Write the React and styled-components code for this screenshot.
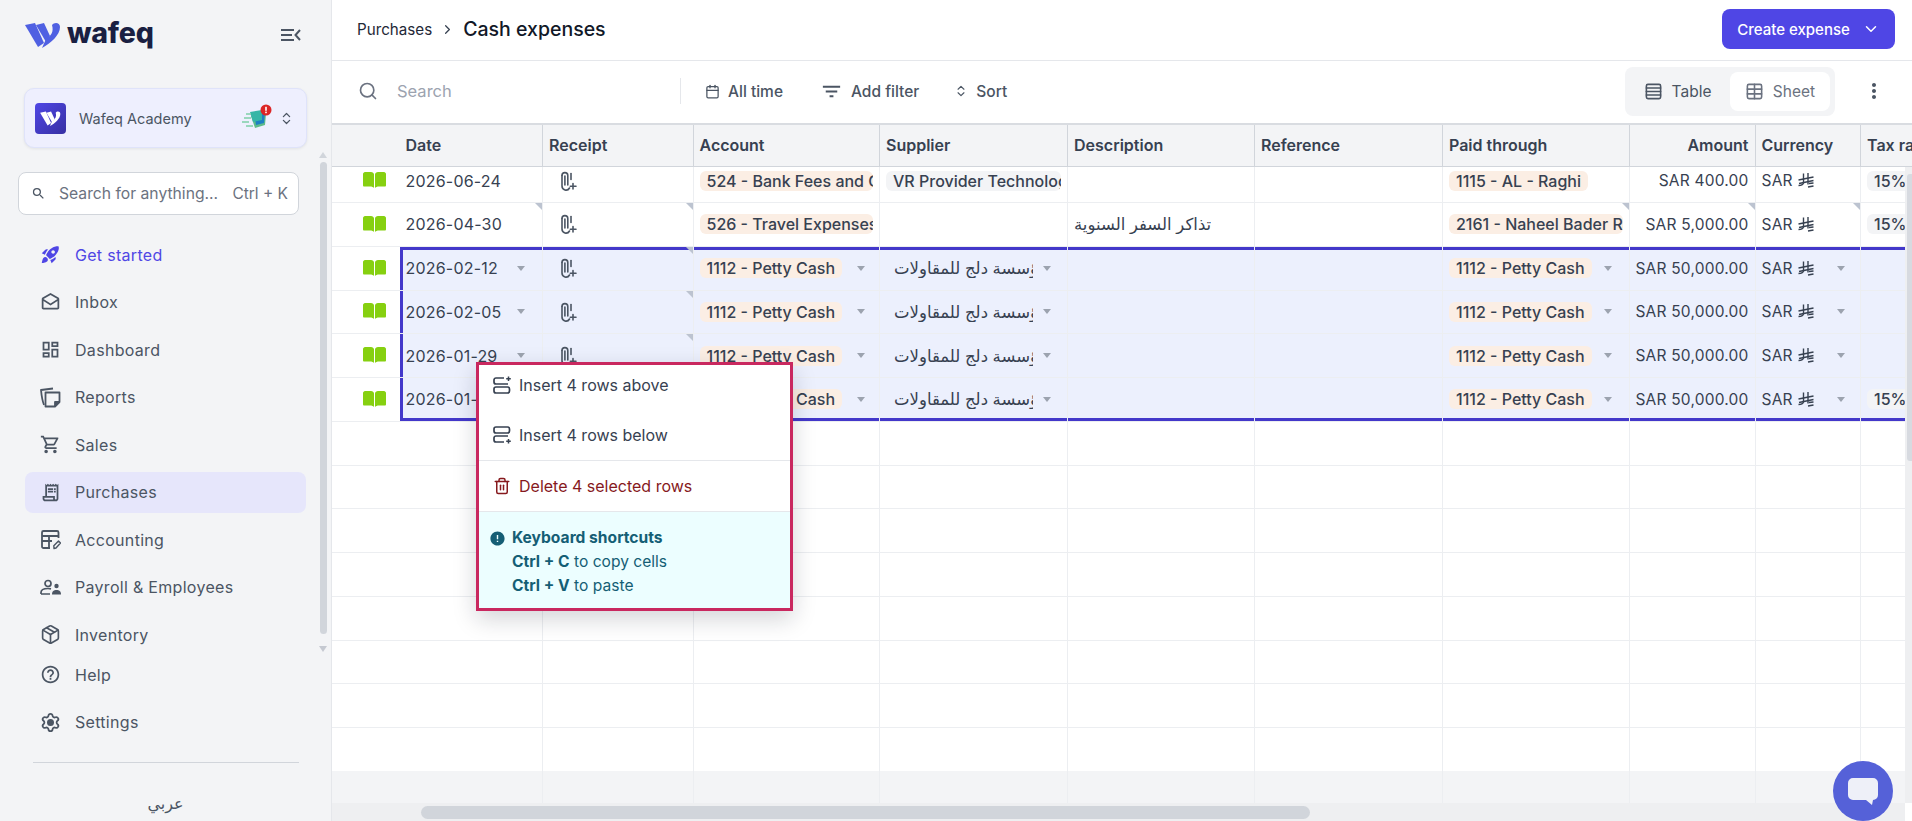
import React from "react";
import styled, { createGlobalStyle, css } from "styled-components";
import { Calendar, ChevronDown, ChevronRight, ChevronsUpDown, Package, Rows4, Search as SearchIcon, Settings, Table as TableIcon, Trash2 } from "lucide-react";
import { MdError, MdFilterList, MdMoreVert, MdOutlineDashboard, MdOutlineDrafts, MdOutlineHelpOutline, MdOutlineReceiptLong, MdOutlineShoppingCart, MdRocketLaunch, MdSearch } from "react-icons/md";

const COLS = "67.5px 143.5px 150.5px 186.5px 188px 187px 188px 187px 125.5px 105.5px 200px";
const FONT = `Inter, "Noto Sans", "DejaVu Sans", sans-serif`;

const GlobalStyle = createGlobalStyle`
  html, body { margin: 0; padding: 0; height: 100%; overflow: hidden; background: #fff; }
  body { font-family: ${FONT}; color: #374151; }
  * { box-sizing: border-box; }
`;

const Page = styled.div`
  position: relative;
  display: flex;
  width: 1912px;
  height: 821px;
  overflow: hidden;
`;

/* sidebar */
const Sidebar = styled.aside`
  position: relative;
  flex: 0 0 330px;
  display: flex;
  flex-direction: column;
  background: #f3f4f6;
  border-right: 1px solid #e5e7eb;
`;

const LogoRow = styled.div`
  height: 70px;
  display: flex;
  align-items: center;
  justify-content: space-between;
  padding: 0 30px 0 25px;
`;

const Brand = styled.div`
  display: flex;
  align-items: center;
  gap: 6px;
`;

const BrandName = styled.span`
  margin-top: -4px;
  font-size: 28.5px;
  line-height: 30px;
  font-weight: 800;
  color: #1a1f42;
  letter-spacing: -0.2px;
`;

const Workspace = styled.div`
  margin: 18px 24px 0;
  height: 60px;
  display: flex;
  align-items: center;
  padding: 0 10px;
  background: #eeeffe;
  border: 1px solid #dfe3fa;
  border-radius: 10px;
  box-shadow: 0 1px 3px rgba(17, 24, 39, 0.08);
  font-size: 14.5px;
  color: #4b5563;
`;

const WorkspaceLogo = styled.div`
  width: 31px;
  height: 31px;
  margin-right: 13px;
  border-radius: 4px;
  background: linear-gradient(135deg, #4f46e5, #3730a3);
  display: flex;
  align-items: center;
  justify-content: center;
`;

const WorkspaceName = styled.span`
  flex: 1;
`;

const SideSearch = styled.div`
  margin: 24px 0 0 18px;
  width: 281px;
  height: 43px;
  display: flex;
  align-items: center;
  padding: 0 10px 0 12px;
  background: #fff;
  border: 1px solid #d1d5db;
  border-radius: 8px;
  font-size: 15.7px;
  color: #6b7280;
  svg { margin-right: 13px; color: #4b5563; }
  span:last-child { margin-left: auto; font-size: 15.5px; }
`;

const Nav = styled.nav`
  margin: 19px 25px 0;
  width: 281px;
  display: flex;
  flex-direction: column;
  gap: 6.5px;
`;

const NavItem = styled.div`
  height: 41px;
  display: flex;
  align-items: center;
  gap: 14px;
  padding-left: 15px;
  border-radius: 8px;
  font-size: 16px;
  letter-spacing: 0.3px;
  color: ${(p) => (p.$accent ? "#4f46e5" : "#4b5563")};
  background: ${(p) => (p.$active ? "#e6e6fb" : "transparent")};
  svg { flex: 0 0 21px; width: 21px; height: 21px; }
`;

const BottomNav = styled(Nav)`
  margin-top: -1px;
`;

const GearIcon = styled(Settings)`
  circle { fill: currentColor; }
`;

const SideRule = styled.hr`
  margin: 19px 32px 0 33px;
  border: 0;
  border-top: 1px solid #d1d5db;
`;

const Lang = styled.div`
  margin-top: 30px;
  text-align: center;
  font-size: 16px;
  color: #4b5563;
`;

const SideThumb = styled.div`
  position: absolute;
  left: 320px;
  top: 162px;
  width: 7px;
  height: 472px;
  border-radius: 4px;
  background: #d1d5db;
`;

const SideArrow = styled.div`
  position: absolute;
  left: 319px;
  top: ${(p) => p.$top}px;
  width: 0;
  height: 0;
  border-left: 4.5px solid transparent;
  border-right: 4.5px solid transparent;
  ${(p) => (p.$down ? "border-top: 6px solid #c5c9d1;" : "border-bottom: 6px solid #d1d5db;")}
`;

/* main */
const Main = styled.main`
  flex: 1;
  min-width: 0;
  display: flex;
  flex-direction: column;
`;

const TopBar = styled.header`
  height: 61px;
  flex: none;
  display: flex;
  align-items: center;
  padding: 0 17px 2px 25px;
  border-bottom: 1px solid #e5e7eb;
`;

const Crumb = styled.span`
  font-size: 15.2px;
  color: #1f2937;
`;

const CrumbSep = styled.span`
  display: flex;
  margin: 0 8px;
  color: #374151;
`;

const Title = styled.h1`
  margin: 0;
  font-size: 19.5px;
  font-weight: 500;
  color: #111827;
`;

const CreateButton = styled.button`
  margin-left: auto;
  width: 173px;
  height: 40px;
  display: flex;
  align-items: center;
  justify-content: center;
  gap: 12px;
  border: 0;
  border-radius: 8px;
  background: #4f46e5;
  color: #fff;
  font: 500 15px ${FONT};
`;

const Toolbar = styled.div`
  height: 62px;
  flex: none;
  display: flex;
  align-items: center;
  padding: 0 0 2px 26px;
`;

const SearchBox = styled.div`
  width: 323px;
  height: 26px;
  display: flex;
  align-items: center;
  gap: 19px;
  border-right: 1px solid #e5e7eb;
  color: #6b7280;
  font-size: 16.5px;
  span { color: #9ca3af; }
`;

const ToolButton = styled.div`
  display: flex;
  align-items: center;
  gap: ${(p) => p.$gap || 8}px;
  margin-left: ${(p) => p.$ml}px;
  font-size: 15.5px;
  font-weight: 500;
  color: #4b5563;
`;

const Segment = styled.div`
  margin-left: auto;
  width: 210px;
  height: 49px;
  display: flex;
  align-items: center;
  padding: 5px 5px 5px 0;
  border-radius: 8px;
  background: #f3f4f6;
`;

const SegmentItem = styled.div`
  flex: ${(p) => (p.$active ? "0 0 100px" : "1")};
  height: 39px;
  display: flex;
  align-items: center;
  justify-content: center;
  gap: 9px;
  border-radius: 8px;
  background: ${(p) => (p.$active ? "#fff" : "transparent")};
  font-size: 15.5px;
  color: ${(p) => (p.$active ? "#6b7280" : "#4b5563")};
`;

const MoreButton = styled.div`
  width: 77px;
  display: flex;
  justify-content: center;
  color: #4b5563;
`;

/* table */
const TableArea = styled.section`
  flex: 1;
  min-height: 0;
  display: flex;
  flex-direction: column;
`;

const HeadRow = styled.div`
  flex: none;
  display: grid;
  grid-template-columns: ${COLS};
  height: 44px;
  overflow: hidden;
  background: #f3f4f6;
  border-top: 2px solid #d9dce1;
  border-bottom: 1px solid #d1d5db;
`;

const HeadCell = styled.div`
  display: flex;
  align-items: center;
  justify-content: ${(p) => (p.$right ? "flex-end" : "flex-start")};
  padding: 0 6px 2px;
  border-right: ${(p) => (p.$plain ? "0" : "1px solid #d1d5db")};
  font-size: 16px;
  font-weight: 600;
  color: #374151;
  white-space: nowrap;
`;

const BodyWrap = styled.div`
  flex: 1;
  min-height: 0;
  display: flex;
`;

const BodyColumn = styled.div`
  flex: 1;
  min-width: 0;
  display: flex;
  flex-direction: column;
`;

const Rows = styled.div`
  flex: 1;
  min-height: 0;
  overflow: hidden;
`;

const RowsInner = styled.div`
  margin-top: -7.75px;
`;

const Row = styled.div`
  display: grid;
  grid-template-columns: ${COLS};
  height: 43.75px;
`;

const selection = (p) => {
  const shadows = [];
  if (p.$selTop) shadows.push("inset 0 3px 0 #4338ca");
  if (p.$selBottom) shadows.push("inset 0 -3px 0 #4338ca");
  if (p.$selLeft) shadows.push("inset 3px 0 0 #4338ca");
  return shadows.length ? `box-shadow: ${shadows.join(", ")};` : "";
};

const Cell = styled.div`
  position: relative;
  min-width: 0;
  display: flex;
  align-items: center;
  justify-content: ${(p) => (p.$right ? "flex-end" : "flex-start")};
  padding: 0 6px;
  overflow: hidden;
  border-right: ${(p) => (p.$plain ? "0" : "1px solid #eceef1")};
  border-bottom: 1px solid #eceef1;
  background: ${(p) => (p.$selected ? "#ecf0fd" : "#fff")};
  font-size: 15.5px;
  letter-spacing: 0.2px;
  color: #374151;
  white-space: nowrap;
  ${selection}
  ${(p) =>
    p.$mark &&
    css`
      &::after {
        content: "";
        position: absolute;
        top: 0;
        right: 0;
        border-top: 7px solid #bcc3d0;
        border-left: 7px solid transparent;
      }
    `}
`;

const DateText = styled.span`
  font-size: 16px;
  letter-spacing: 0.2px;
`;

const Tag = styled.span`
  display: inline-block;
  max-width: 100%;
  height: 20px;
  line-height: 20px;
  padding: 0 7px;
  overflow: hidden;
  border-radius: 6px;
  background: ${(p) => (p.$gray ? "#f3f4f6" : "#fbeee4")};
  font-size: 16px;
  letter-spacing: 0;
  font-weight: 500;
  color: #374151;
`;

const ArabicText = styled.span`
  display: block;
  overflow: hidden;
  min-width: 0;
  flex: ${(p) => (p.$fill ? "1" : "none")};
  margin: ${(p) => (p.$fill ? "0 10px 0 8px" : "0")};
  font-size: 16.5px;
  letter-spacing: 0;
  color: #374151;
`;

const Caret = styled.i`
  flex: none;
  margin-left: auto;
  margin-right: ${(p) => p.$mr || 11}px;
  width: 0;
  height: 0;
  border-left: 4.5px solid transparent;
  border-right: 4.5px solid transparent;
  border-top: 5px solid #9ca3af;
`;

const BookCell = styled.div`
  display: flex;
  align-items: center;
  padding-left: 31px;
  background: #fff;
  border-bottom: 1px solid #eceef1;
`;

const ClipWrap = styled.span`
  display: flex;
  margin-left: 12px;
  color: #4b5563;
`;

const FootRow = styled.div`
  flex: none;
  display: grid;
  grid-template-columns: ${COLS};
  height: 32px;
  background: #f3f4f6;
`;

const FootCell = styled.div`
  border-right: ${(p) => (p.$plain ? "0" : "1px solid #eceef1")};
`;

const HScroll = styled.div`
  flex: none;
  height: 18px;
  padding: 3px 0 0 89px;
  background: #eeeff1;
`;

const HThumb = styled.div`
  width: 889px;
  height: 13px;
  border-radius: 7px;
  background: #d1d5db;
`;

const VScroll = styled.div`
  flex: 0 0 7px;
  margin-bottom: 18px;
  padding: 7px 0 0 2px;
  background: #eeeff1;
`;

const VThumb = styled.div`
  height: 287px;
  border-radius: 3px 0 0 3px;
  background: #d7dae0;
`;

/* context menu */
const Menu = styled.div`
  position: absolute;
  left: 476px;
  top: 362px;
  width: 317px;
  height: 249px;
  display: flex;
  flex-direction: column;
  background: #fff;
  border: 3px solid #c9285f;
  box-shadow: 0 8px 22px rgba(17, 24, 39, 0.18);
`;

const MenuItem = styled.div`
  height: ${(p) => (p.$first ? 45 : 50)}px;
  flex: none;
  display: flex;
  align-items: center;
  gap: 8px;
  padding: ${(p) => (p.$first ? "0 0 5px 14px" : "0 0 0 14px")};
  font-size: 16px;
  color: ${(p) => (p.$danger ? "#86191d" : "#374151")};
  svg { flex: none; }
`;

const MenuRule = styled.div`
  height: 1px;
  flex: none;
  background: #e5e7eb;
`;

const Shortcuts = styled.div`
  flex: 1;
  display: flex;
  gap: 6px;
  padding: 14px 0 0 10px;
  background: #ecfeff;
  color: #155e75;
  font-size: 15.6px;
  line-height: 24px;
  b { font-weight: 700; }
  svg { flex: none; margin-top: 4px; }
`;

const ChatBubble = styled.div`
  position: absolute;
  left: 1833px;
  top: 761px;
  width: 60px;
  height: 60px;
  display: flex;
  align-items: center;
  justify-content: center;
  border-radius: 50%;
  background: #5561d8;
`;

/* drawn icons */
const LogoMark = () => (
  <svg width="36" height="26" viewBox="0 0 36 26" fill="#4f60e2">
    <path d="M0 3 L10 1 L19 21 L13 25 Z" />
    <path d="M11 3 L19 1 L25 14 L21 20 Z" />
    <path d="M27 3 C29 0 35 0 35 5 C35 13 26 21 17 26 L21 17 C26 14 29 10 27 3 Z" />
  </svg>
);

const SmallMark = () => (
  <svg width="21" height="15" viewBox="0 0 36 26" fill="#fff">
    <path d="M0 3 L10 1 L19 21 L13 25 Z" />
    <path d="M11 3 L19 1 L25 14 L21 20 Z" />
    <path d="M27 3 C29 0 35 0 35 5 C35 13 26 21 17 26 L21 17 C26 14 29 10 27 3 Z" />
  </svg>
);

const CollapseIcon = () => (
  <svg width="20" height="14" viewBox="0 0 20 14" fill="none" stroke="#4b5563" strokeWidth="2">
    <path d="M0 2 H13 M0 7 H11 M0 12 H13 M19 2 L14.5 7 L19 12" />
  </svg>
);

const SpeedIcon = () => (
  <svg width="30" height="28" viewBox="0 0 30 28">
    <path d="M9 12 L24 10 L23 21 L13 24 Z" fill="#5dbb8a" />
    <path d="M12 9 L23 8 L22 19 L14 21 Z" fill="#1d7fc4" />
    <path d="M8 8 L20 6 L20 16 L11 18 Z" fill="#35b6a6" />
    <path d="M4 10 H9 M2 14 H9 M0 18 H7 M4 22 H11" stroke="#7fd0a8" strokeWidth="1.6" />
    <circle cx="24" cy="6" r="5.5" fill="#dc2626" />
    <rect x="23.2" y="2.8" width="1.6" height="4" fill="#fff" />
    <rect x="23.2" y="7.6" width="1.6" height="1.6" fill="#fff" />
  </svg>
);

const ReportsIcon = () => (
  <svg viewBox="0 0 21 21" fill="none" stroke="currentColor" strokeWidth="1.8" strokeLinejoin="round">
    <path d="M4 18 C2 13 1.5 8 1 3 L13 1.5" />
    <path d="M5.5 5.5 H19.5 V15 L15 19.5 H5.5 Z" />
    <path d="M19.5 15 H15 V19.5" fill="currentColor" />
  </svg>
);

const AccountingIcon = () => (
  <svg viewBox="0 0 21 21" fill="none" stroke="currentColor" strokeWidth="1.8" strokeLinejoin="round">
    <path d="M10 19 H3.5 A1.5 1.5 0 0 1 2 17.5 V3.5 A1.5 1.5 0 0 1 3.5 2 H17 A1.5 1.5 0 0 1 18.5 3.5 V9" />
    <path d="M2 7 H18.5 M2 12 H12 M9 7 V19" />
    <path d="M14 19.5 L13.8 16.8 L18.5 12 L20.5 14 L16 19 Z" strokeWidth="1.4" />
  </svg>
);

const PeopleIcon = () => (
  <svg viewBox="0 0 21 21" fill="none" stroke="currentColor" strokeWidth="1.7">
    <circle cx="8" cy="6.5" r="3" />
    <path d="M1 17 V15.5 C1 12.5 5 11.5 8 11.5 C9 11.5 10 11.6 11 11.9 M1 17 H10" />
    <circle cx="16.5" cy="9" r="2.2" fill="currentColor" stroke="none" />
    <path d="M12 17.5 C12 14 14 13 16.5 13 C19 13 21 14 21 17.5 Z" fill="currentColor" stroke="none" />
  </svg>
);

const ClipIcon = () => (
  <svg width="16" height="20" viewBox="0 0 16 20" fill="none" stroke="currentColor" strokeWidth="1.6" strokeLinecap="round">
    <path d="M1 4.5 A2.9 2.9 0 0 1 6.8 4.5 V14" />
    <path d="M1 4.5 V15 A4 4 0 0 0 8.5 17" />
    <path d="M3.9 5 V14" />
    <path d="M10 2.5 V8.5" />
    <path d="M12 12.5 V18 M9.3 15.3 H15" />
  </svg>
);

const BookIcon = () => (
  <svg width="23" height="17" viewBox="0 0 23 17" fill="#86d010">
    <path d="M0 2 C0 1 1 0 2 0 H8 C9.5 0 11 1 11 2.5 V16 C10 15 9 14.5 7 14.5 H1 C0.5 14.5 0 14 0 13.5 Z" />
    <path d="M23 2 C23 1 22 0 21 0 H15 C13.5 0 12 1 12 2.5 V16 C13 15 14 14.5 16 14.5 H22 C22.5 14.5 23 14 23 13.5 Z" />
  </svg>
);

const RiyalIcon = () => (
  <svg width="16" height="15" viewBox="0 0 16 15" fill="none" stroke="#374151" strokeWidth="1.4" style={{ marginLeft: 5, flex: "none" }}>
    <path d="M5.5 0.5 V10 C5 11.5 3 12.5 0.5 12.5" />
    <path d="M10 0 V11.5" />
    <path d="M0.5 7 L15.5 4 M1 10.5 L15.5 7.5 M10 14 L15.5 13 M11 10.5 L15.5 10" />
  </svg>
);

const RowsAboveIcon = () => (
  <svg width="18" height="18" viewBox="0 0 18 18" fill="none" stroke="#374151" strokeWidth="1.7">
    <path d="M11 2 H3 A2 2 0 0 0 1 4 V6 A2 2 0 0 0 3 8 H15" />
    <rect x="1" y="11" width="15.5" height="6" rx="2" />
    <path d="M15.5 0.5 V5 M13.2 2.7 H17.8" strokeWidth="1.5" />
  </svg>
);

const RowsBelowIcon = () => (
  <svg width="18" height="18" viewBox="0 0 18 18" fill="none" stroke="#374151" strokeWidth="1.7">
    <rect x="1" y="1" width="15.5" height="6" rx="2" />
    <path d="M15 10 H3 A2 2 0 0 0 1 12 V14 A2 2 0 0 0 3 16 H11" />
    <path d="M15.5 13 V17.5 M13.2 15.2 H17.8" strokeWidth="1.5" />
  </svg>
);

const ChatIcon = () => (
  <svg width="30" height="27" viewBox="0 0 30 27">
    <path d="M5 0 H25 A5 5 0 0 1 30 5 V17 A5 5 0 0 1 25 22 L24 27 L18 22 H5 A5 5 0 0 1 0 17 V5 A5 5 0 0 1 5 0 Z" fill="#eef0f8" />
  </svg>
);

const navMain = [
  { label: "Get started", icon: <MdRocketLaunch />, accent: true },
  { label: "Inbox", icon: <MdOutlineDrafts /> },
  { label: "Dashboard", icon: <MdOutlineDashboard /> },
  { label: "Reports", icon: <ReportsIcon /> },
  { label: "Sales", icon: <MdOutlineShoppingCart /> },
  { label: "Purchases", icon: <MdOutlineReceiptLong />, active: true },
  { label: "Accounting", icon: <AccountingIcon /> },
  { label: "Payroll & Employees", icon: <PeopleIcon /> },
  { label: "Inventory", icon: <Package strokeWidth={1.9} /> },
];

const headers = ["Date", "Receipt", "Account", "Supplier", "Description", "Reference", "Paid through", "Amount", "Currency", "Tax rate"];

const SUPPLIER = "مؤسسة دلج للمقاولات";
const petty = "1112 - Petty Cash";

const rows = [
  { date: "2026-06-24", account: "524 - Bank Fees and Charges", supplier: "VR Provider Technologies", paid: "1115 - AL - Raghi", amount: "SAR 400.00", tax: "15%" },
  { date: "2026-04-30", account: "526 - Travel Expenses", desc: "تذاكر السفر السنوية", paid: "2161 - Naheel Bader Rashid", amount: "SAR 5,000.00", tax: "15%", marks: ["date", "receipt", "paid", "amount", "currency"] },
  { date: "2026-02-12", account: petty, arabicSupplier: SUPPLIER, paid: petty, amount: "SAR 50,000.00", selected: true, first: true, marks: ["receipt"] },
  { date: "2026-02-05", account: petty, arabicSupplier: SUPPLIER, paid: petty, amount: "SAR 50,000.00", selected: true, marks: ["receipt"] },
  { date: "2026-01-29", account: petty, arabicSupplier: SUPPLIER, paid: petty, amount: "SAR 50,000.00", selected: true, marks: ["receipt"] },
  { date: "2026-01-22", account: petty, arabicSupplier: SUPPLIER, paid: petty, amount: "SAR 50,000.00", tax: "15%", selected: true, last: true },
];

const emptyRows = Array.from({ length: 8 }, (_, i) => i);

function DataRow({ row }) {
  const sel = { $selected: row.selected, $selTop: row.first, $selBottom: row.last };
  const mark = (name) => (row.marks || []).includes(name);
  return (
    <Row>
      <BookCell>
        <BookIcon />
      </BookCell>
      <Cell {...sel} $selLeft={row.selected} $mark={mark("date")}>
        <DateText>{row.date}</DateText>
        {row.selected && <Caret />}
      </Cell>
      <Cell {...sel} $mark={mark("receipt")}>
        <ClipWrap>
          <ClipIcon />
        </ClipWrap>
      </Cell>
      <Cell {...sel}>
        <Tag>{row.account}</Tag>
        {row.selected && <Caret $mr={8} />}
      </Cell>
      <Cell {...sel}>
        {row.supplier && <Tag $gray>{row.supplier}</Tag>}
        {row.arabicSupplier && <ArabicText $fill>{row.arabicSupplier}</ArabicText>}
        {row.selected && <Caret $mr={10} />}
      </Cell>
      <Cell {...sel}>{row.desc && <ArabicText>{row.desc}</ArabicText>}</Cell>
      <Cell {...sel} />
      <Cell {...sel} $mark={mark("paid")}>
        <Tag>{row.paid}</Tag>
        {row.selected && <Caret />}
      </Cell>
      <Cell {...sel} $right $mark={mark("amount")}>
        {row.amount}
      </Cell>
      <Cell {...sel} $mark={mark("currency")}>
        SAR
        <RiyalIcon />
        {row.selected && <Caret $mr={9} />}
      </Cell>
      <Cell {...sel}>{row.tax && <Tag $gray>{row.tax}</Tag>}</Cell>
    </Row>
  );
}

function EmptyRow() {
  return (
    <Row>
      <BookCell />
      {headers.map((h) => (
        <Cell key={h} />
      ))}
    </Row>
  );
}

export default function App() {
  return (
    <Page>
      <GlobalStyle />
      <Sidebar>
        <LogoRow>
          <Brand>
            <LogoMark />
            <BrandName>wafeq</BrandName>
          </Brand>
          <CollapseIcon />
        </LogoRow>
        <Workspace>
          <WorkspaceLogo>
            <SmallMark />
          </WorkspaceLogo>
          <WorkspaceName>Wafeq Academy</WorkspaceName>
          <SpeedIcon />
          <ChevronsUpDown size={15} color="#4b5563" style={{ marginLeft: 7, marginRight: 2 }} />
        </Workspace>
        <SideSearch>
          <MdSearch size={15} />
          <span>Search for anything...</span>
          <span>Ctrl + K</span>
        </SideSearch>
        <Nav>
          {navMain.map((item) => (
            <NavItem key={item.label} $accent={item.accent} $active={item.active}>
              {item.icon}
              {item.label}
            </NavItem>
          ))}
        </Nav>
        <BottomNav>
          <NavItem>
            <MdOutlineHelpOutline />
            Help
          </NavItem>
          <NavItem>
            <GearIcon strokeWidth={2} />
            Settings
          </NavItem>
        </BottomNav>
        <SideRule />
        <Lang>عربي</Lang>
        <SideArrow $top={152} />
        <SideThumb />
        <SideArrow $top={646} $down />
      </Sidebar>

      <Main>
        <TopBar>
          <Crumb>Purchases</Crumb>
          <CrumbSep>
            <ChevronRight size={15} />
          </CrumbSep>
          <Title>Cash expenses</Title>
          <CreateButton>
            Create expense
            <ChevronDown size={18} />
          </CreateButton>
        </TopBar>

        <Toolbar>
          <SearchBox>
            <SearchIcon size={20} />
            <span>Search</span>
          </SearchBox>
          <ToolButton $ml={24}>
            <Calendar size={15} />
            All time
          </ToolButton>
          <ToolButton $ml={37}>
            <MdFilterList size={23} />
            Add filter
          </ToolButton>
          <ToolButton $ml={35} $gap={8}>
            <ChevronsUpDown size={14} />
            Sort
          </ToolButton>
          <Segment>
            <SegmentItem>
              <Rows4 size={19} />
              Table
            </SegmentItem>
            <SegmentItem $active>
              <TableIcon size={19} />
              Sheet
            </SegmentItem>
          </Segment>
          <MoreButton>
            <MdMoreVert size={24} />
          </MoreButton>
        </Toolbar>

        <TableArea>
          <HeadRow>
            <HeadCell $plain />
            {headers.map((h) => (
              <HeadCell key={h} $right={h === "Amount"}>
                {h}
              </HeadCell>
            ))}
          </HeadRow>
          <BodyWrap>
            <BodyColumn>
              <Rows>
                <RowsInner>
                  {rows.map((row) => (
                    <DataRow key={row.date} row={row} />
                  ))}
                  {emptyRows.map((i) => (
                    <EmptyRow key={i} />
                  ))}
                </RowsInner>
              </Rows>
              <FootRow>
                <FootCell $plain />
                {headers.map((h) => (
                  <FootCell key={h} />
                ))}
              </FootRow>
              <HScroll>
                <HThumb />
              </HScroll>
            </BodyColumn>
            <VScroll>
              <VThumb />
            </VScroll>
          </BodyWrap>
        </TableArea>
      </Main>

      <Menu>
        <MenuItem $first>
          <RowsAboveIcon />
          Insert 4 rows above
        </MenuItem>
        <MenuItem>
          <RowsBelowIcon />
          Insert 4 rows below
        </MenuItem>
        <MenuRule />
        <MenuItem $danger>
          <Trash2 size={18} />
          Delete 4 selected rows
        </MenuItem>
        <MenuRule />
        <Shortcuts>
          <MdError size={17} />
          <div>
            <b>Keyboard shortcuts</b>
            <br />
            <b>Ctrl + C</b> to copy cells
            <br />
            <b>Ctrl + V</b> to paste
          </div>
        </Shortcuts>
      </Menu>

      <ChatBubble>
        <ChatIcon />
      </ChatBubble>
    </Page>
  );
}
